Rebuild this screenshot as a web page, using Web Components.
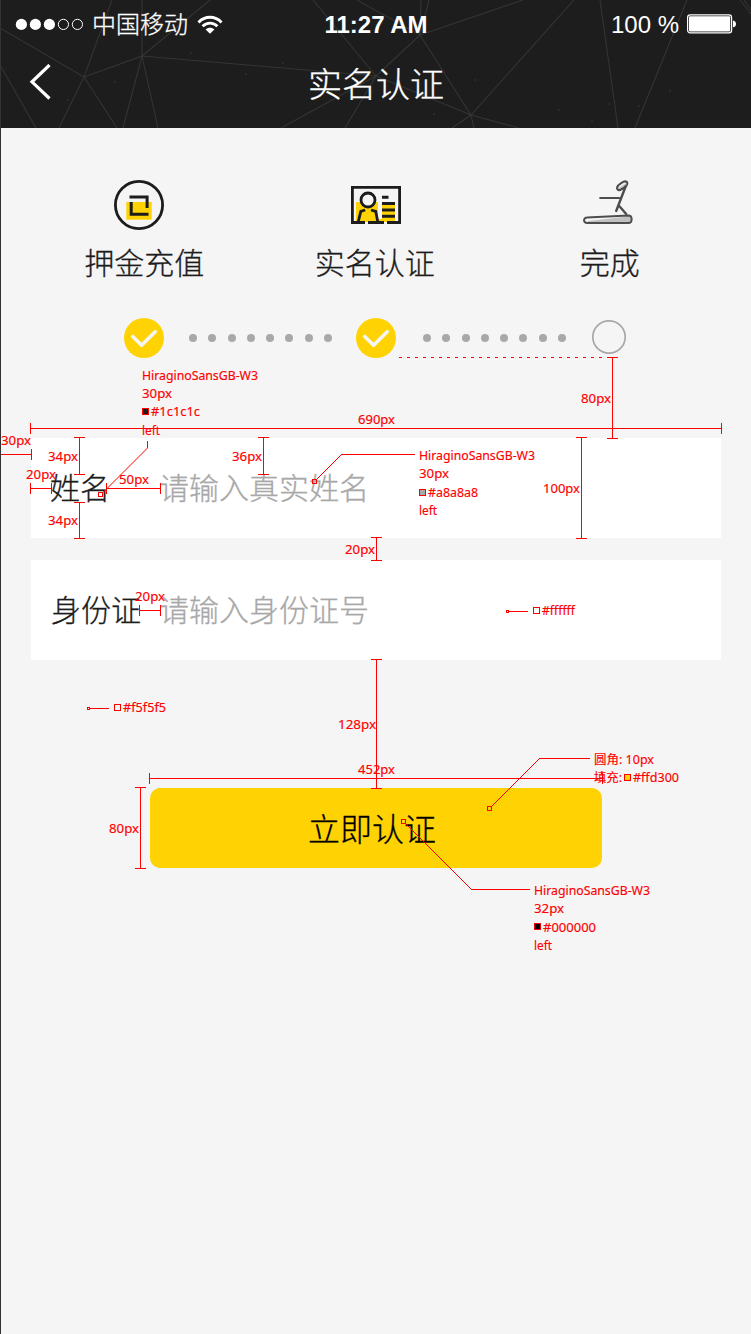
<!DOCTYPE html>
<html lang="zh-CN">
<head>
<meta charset="utf-8">
<title>实名认证</title>
<style>
html,body{margin:0;padding:0}
body{width:751px;height:1334px;overflow:hidden;background:#f5f5f5;font-family:"Noto Sans CJK SC","Liberation Sans",sans-serif;font-weight:300}
</style>
</head>
<body>
<verify-page></verify-page>
<script>
function define(name, html, setup) {
  const t = document.createElement('template');
  t.innerHTML = html;
  customElements.define(name, class extends HTMLElement {
    constructor() {
      super();
      this.attachShadow({mode: 'open'}).append(t.content.cloneNode(true));
    }
    connectedCallback() { if (setup) setup(this, this.shadowRoot); }
  });
}

define('status-bar', `
<style>
:host{display:flex;height:48px;align-items:center;padding:0 14px;color:#fff;font-size:24px;line-height:1}
.side{flex:1;display:flex;align-items:center}
.right{justify-content:flex-end}
.carrier{margin:-3px 9px 0 8px;white-space:nowrap;-webkit-text-stroke:.3px}
.time{font:bold 24px/1 "Liberation Sans",sans-serif;margin-top:1px}
.pct{font:24px/1 "Liberation Sans",sans-serif;margin:2px 8px 0 0}
svg{display:block;flex:none}
</style>
<div class="side">
<svg width="69" height="14" viewBox="0 0 69 14"><g fill="#fff"><circle cx="6.4" cy="7.4" r="5.6"/><circle cx="20.4" cy="7.4" r="5.6"/><circle cx="34.4" cy="7.4" r="5.6"/></g><g fill="none" stroke="#fff"><circle cx="48.4" cy="7.4" r="5.1"/><circle cx="62.4" cy="7.4" r="5.1"/></g></svg>
<span class="carrier">中国移动</span>
<svg width="26" height="19" viewBox="0 0 26 19"><g fill="none" stroke="#fff" stroke-width="2.9"><path d="M1.5 7.4C8 .6 18 .6 24.5 7.4"/><path d="M5.6 11.3c4.2-4.2 10.6-4.2 14.8 0"/></g><path d="M8.6 14.5c2.4-2.5 6.4-2.5 8.8 0L13 18.8z" fill="#fff"/></svg>
</div>
<span class="time">11:27 AM</span>
<div class="side right"><span class="pct">100 %</span>
<svg width="50" height="20" viewBox="0 0 50 20"><rect x=".6" y=".9" width="44" height="18" rx="2.6" fill="none" stroke="#fff" stroke-width="1.2"/><rect x="2" y="2.3" width="41.2" height="15.2" rx="1" fill="#fff"/><path d="M46 6.5q3 .6 3 3.4t-3 3.4z" fill="#fff"/></svg></div>
`);

define('nav-bar', `
<style>
:host{display:grid;grid-template-columns:60px 1fr 60px;height:80px;align-items:center;color:#fff}
svg{display:block;margin:-12px 0 0 28px}
h1{margin:-10px 0 0;font-size:34px;font-weight:300;line-height:40px;text-align:center;-webkit-text-stroke:.35px}
</style>
<svg width="24" height="36" viewBox="0 0 24 36"><path d="M20.5 1 3 17.8 20.5 34.5" fill="none" stroke="#fff" stroke-width="3.2"/></svg>
<h1><slot></slot></h1><span></span>
`);

define('page-header', `
<style>
:host{display:grid;height:128px;background:#1d1d1d;overflow:hidden}
svg,.content{grid-area:1/1}
</style>
<svg width="750" height="128" viewBox="1 0 750 128" fill="none" stroke="#343434" stroke-width="1.1">
<path d="M0 28 84 77 112 0M0 65l36 63M84 77l-25 51M84 77l33 51M84 77l58-21V0M142 56 210 0M142 56l234 20M142 56l-19 72M142 56l16 72M376 76 313 0M376 76 281 128M376 76l-31 52M376 76l44-41-63-35M376 76l95 39M421 0l-1 35 9-35M420 35 523 0M420 35l51 80L574 0M471 115l-19 13M471 115l3 13M471 115l48 13M600 0l18 128M687 0l-52 128M740 0l11 14M744 0l7 10"/>
<g fill="#3a3a3a" stroke="none"><circle cx="191" cy="53" r=".8"/><circle cx="246" cy="74" r=".8"/><circle cx="115" cy="82" r=".8"/><circle cx="68" cy="100" r=".8"/><circle cx="475" cy="80" r=".8"/><circle cx="559" cy="110" r=".8"/><circle cx="609" cy="104" r=".8"/><circle cx="639" cy="106" r=".8"/><circle cx="592" cy="121" r=".8"/><circle cx="283" cy="63" r=".8"/><circle cx="434" cy="114" r=".8"/><circle cx="670" cy="91" r=".8"/></g>
</svg>
<div class="content"><slot></slot></div>
`);

define('step-item', `
<style>
:host{display:flex;flex-direction:column;align-items:center}
.icon{height:50px;display:flex;align-items:center;margin-left:var(--shift,0)}
.label{font-size:30px;line-height:40px;margin:11px 0 1px var(--nudge,0);color:#1c1c1c;white-space:nowrap;-webkit-text-stroke:.3px}
</style>
<div class="icon"><slot name="icon"></slot></div><div class="label"><slot></slot></div>
`);

define('step-mark', `
<style>:host{display:block;width:40px;height:40px}svg{display:block}</style>
<svg width="40" height="40" viewBox="0 0 40 40"></svg>
`, (el, root) => {
  root.querySelector('svg').innerHTML = el.hasAttribute('done')
    ? '<circle cx="20" cy="20" r="20" fill="#ffd303"/><path d="M8.7 18.5 17.6 27.3 31.2 13.8" fill="none" stroke="#f5f5f5" stroke-width="3.6" stroke-linecap="round" stroke-linejoin="round"/>'
    : '<circle cx="20" cy="19" r="16.2" fill="none" stroke="#a8a8a8" stroke-width="1.7"/>';
});

define('step-dots', `
<style>:host{display:flex;justify-content:space-between;width:143px}i{width:8px;height:8px;border-radius:50%;background:#a8a8a8}</style>
<i></i><i></i><i></i><i></i><i></i><i></i><i></i><i></i>
`);

define('step-progress', `
<style>
:host{display:block;padding-top:52px}
.items{display:grid;grid-template-columns:repeat(3,232.5px);margin-left:26px}
.track{display:flex;align-items:center;margin:36px 0 0 123px}
step-dots{margin:0 24px 0 25px}
step-dots.b{margin:0 23px 0 27px}
svg{display:block}
</style>
<div class="items">
<step-item style="--shift:-8px;--nudge:2px"><svg slot="icon" width="50" height="50" viewBox="0 0 50 50"><circle cx="25" cy="25" r="23.6" fill="none" stroke="#1c1c1c" stroke-width="2.8"/><path fill="#ffd303" d="M12.3 22h25.4v17.7H12.3z"/><path d="M15.5 17h17.6v11M34.5 34.3H17.2V22" fill="none" stroke="#1c1c1c" stroke-width="3"/></svg>押金充值</step-item>
<step-item style="--shift:1px;--nudge:-2px"><svg slot="icon" width="50" height="38" viewBox="0 0 50 38"><path fill="#ffd303" d="M5 16h39v20H5z"/><path fill="#f5f5f5" d="M28 4h16v12H28zM27 16h4v17h-4z"/><circle cx="17" cy="14" r="7" fill="#f5f5f5" stroke="#1c1c1c" stroke-width="2.8"/><path d="M1.4 38V1.4h47.2V38M0 36.5h14M17 36.5h16M36 36.5h14" fill="none" stroke="#1c1c1c" stroke-width="2.8"/><path d="M7.2 36 9.8 25.3 14.2 24M26.8 36 24.7 25.3 20 24" fill="none" stroke="#1c1c1c" stroke-width="2.8"/><path d="M31 11.3h6.5M31 17.5h13M31 24h13M31 30.3h13" stroke="#1c1c1c" stroke-width="3"/></svg>实名认证</step-item>
<step-item style="--shift:0px;--nudge:3px"><svg slot="icon" width="50" height="50" viewBox="0 0 50 46" preserveAspectRatio="xMidYMin" fill="none" stroke="#4d4d4d" stroke-linecap="round"><path d="M5 41 49 36v6H5z" fill="#aaa" stroke="none" opacity=".7"/><path d="M4 37.6 45.5 35.4c4.2 0 4.2 7.6 0 7.6H4.3c-4.3 0-4.3-5.3-.3-5.4z" stroke-width="2"/><path d="M17.2 18h19" stroke-width="2.2"/><path d="M43 5.5 33.2 31M36.2 26l7 8" stroke-width="2.4"/><path d="M34.2 7.3c.5-2.6 7-6.8 9.2-5.6 2.5 1.4-.6 6-6.4 8.2-2 .8-3.1-1-2.8-2.6z" stroke-width="2.2"/><path d="m37 8 6-4" stroke="#bbb" stroke-width="1.5"/></svg>完成</step-item>
</div>
<div class="track"><step-mark done></step-mark><step-dots></step-dots><step-mark done></step-mark><step-dots class="b"></step-dots><step-mark></step-mark></div>
`);

define('form-field', `
<style>
:host{display:grid;grid-template-columns:var(--label,108px) 1fr;align-items:center;height:100px;box-sizing:border-box;padding-left:20px;background:#fff;font-size:30px;line-height:40px;white-space:nowrap;-webkit-text-stroke:.3px}
.l{color:#1c1c1c;margin:-5px 0 0 var(--inset,0)}
.p{color:#a8a8a8;margin-top:-5px}
</style>
<span class="l"></span><span class="p"></span>
`, (el, root) => {
  root.querySelector('.l').textContent = el.getAttribute('label');
  root.querySelector('.p').textContent = el.getAttribute('placeholder');
});

define('primary-button', `
<style>
:host{display:block;width:452px}
button{display:block;width:100%;height:80px;border:0;border-radius:10px;background:#ffd303;color:#000;font:300 32px/40px "Noto Sans CJK SC",sans-serif;padding:0 8px 2px 0;-webkit-text-stroke:.3px}
</style><button><slot></slot></button>
`);

define('spec-overlay', `
<style>:host{position:absolute;inset:0;pointer-events:none}svg{display:block}
text{fill:#f00;stroke:#f00;stroke-width:.15px;font:12px "Noto Sans","Noto Sans CJK SC",sans-serif;white-space:pre}</style>
<svg width="751" height="1334" viewBox="0 0 751 1334"><g id="s" fill="none" stroke="#f00" shape-rendering="crispEdges"></g><g id="d" fill="none" stroke="#f00"></g><g id="t"></g></svg>
`, (el, root) => {
  // Horizontal measures: y, x start, x end
  const h = [[428,30,721],[454,0,31],[488,30,51],[488,106,160],[610,139,160],[778,149,602]];
  // Vertical measures: x, y start, y end
  const v = [[79,437,474],[79,502,538],[263,437,474],[581,437,538],[612,357,438],[376,537,560],[376,659,788],[140,787,868]];
  let d = '';
  for (const [y,a,b] of h) d += `M${a} ${y+.5}H${b+1}M${a+.5} ${y-5}v11M${b+.5} ${y-5}v11`;
  for (const [x,a,b] of v) d += `M${x+.5} ${a}V${b+1}M${x-5} ${a+.5}h11M${x-5} ${b+.5}h11`;
  d += 'M147.5 441v7M415 454.5h-74M509 611.5h19M90 708.5h19M590 758.5h-51M530 889.5h-59';
  // Swatches: x, y, outer size, fill
  const sq = [[98,492,5,'none'],[312,479,5,'none'],[487,806,5,'none'],[401,819,5,'none'],[506,610,3,'none'],[87,707,3,'none'],
    [142,408,7,'#1c1c1c'],[419,489,7,'#a8a8a8'],[533,607,7,'#fff'],[114,704,7,'#f5f5f5'],[624,774,7,'#ffd300'],[534,923,7,'#000']];
  root.getElementById('s').innerHTML = `<path d="${d}"/><path d="M399 357.5h208" stroke-dasharray="3 5"/>` +
    sq.map(([x,y,s,f]) => `<rect x="${x+.5}" y="${y+.5}" width="${s-1}" height="${s-1}" fill="${f}"/>`).join('');
  root.getElementById('d').innerHTML = '<path d="M147.5 448 103 492.5M341.5 454.5 317 479M539.5 758.5 492 806M471.5 889.5 406 824"/>';
  // Captions: text, x, baseline, width
  const t = [['HiraginoSansGB-W3',142,380,116],['30px',142,398,30],['#1c1c1c',151,416,49],['left',142,435,18],
    ['690px',358,424,37],['80px',581,403,30],['30px',1,445,30],['34px',48,461,30],['20px',26,479,30],['50px',119,484,30],['36px',232,461,30],['34px',48,525,30],
    ['100px',543,493,37],['20px',345,554,30],['20px',135,601,30],['128px',338,729,38],['452px',358,774,37],['80px',109,833,30],
    ['HiraginoSansGB-W3',419,460,116],['30px',419,478,30],['#a8a8a8',428,497,50],['left',419,515,18],
    ['#ffffff',542,615,33],['#f5f5f5',123,712,43],
    ['圆角: 10px',594,764,60],['填充:',594,782,28],['#ffd300',633,782,46],
    ['HiraginoSansGB-W3',534,895,116],['32px',534,913,30],['#000000',543,932,53],['left',534,950,18]];
  root.getElementById('t').innerHTML = t.map(([s,x,y,w]) => `<text x="${x}" y="${y}" textLength="${w}" lengthAdjust="spacingAndGlyphs">${s}</text>`).join('');
});

define('verify-page', `
<style>
:host{display:block;position:relative;width:751px;height:1334px;box-sizing:border-box;border-left:1px solid #333;background:#f5f5f5;overflow:hidden}
spec-overlay{left:-1px}
.form{display:grid;gap:22px;margin:80px 30px 0}
primary-button{margin:128px 0 0 149px}
</style>
<page-header><status-bar></status-bar><nav-bar>实名认证</nav-bar></page-header>
<step-progress></step-progress>
<div class="form">
<form-field label="姓名" placeholder="请输入真实姓名" style="--inset:-1px"></form-field>
<form-field label="身份证" placeholder="请输入身份证号" style="--inset:0px"></form-field>
</div>
<primary-button>立即认证</primary-button>
<spec-overlay></spec-overlay>
`);
</script>
</body>
</html>
